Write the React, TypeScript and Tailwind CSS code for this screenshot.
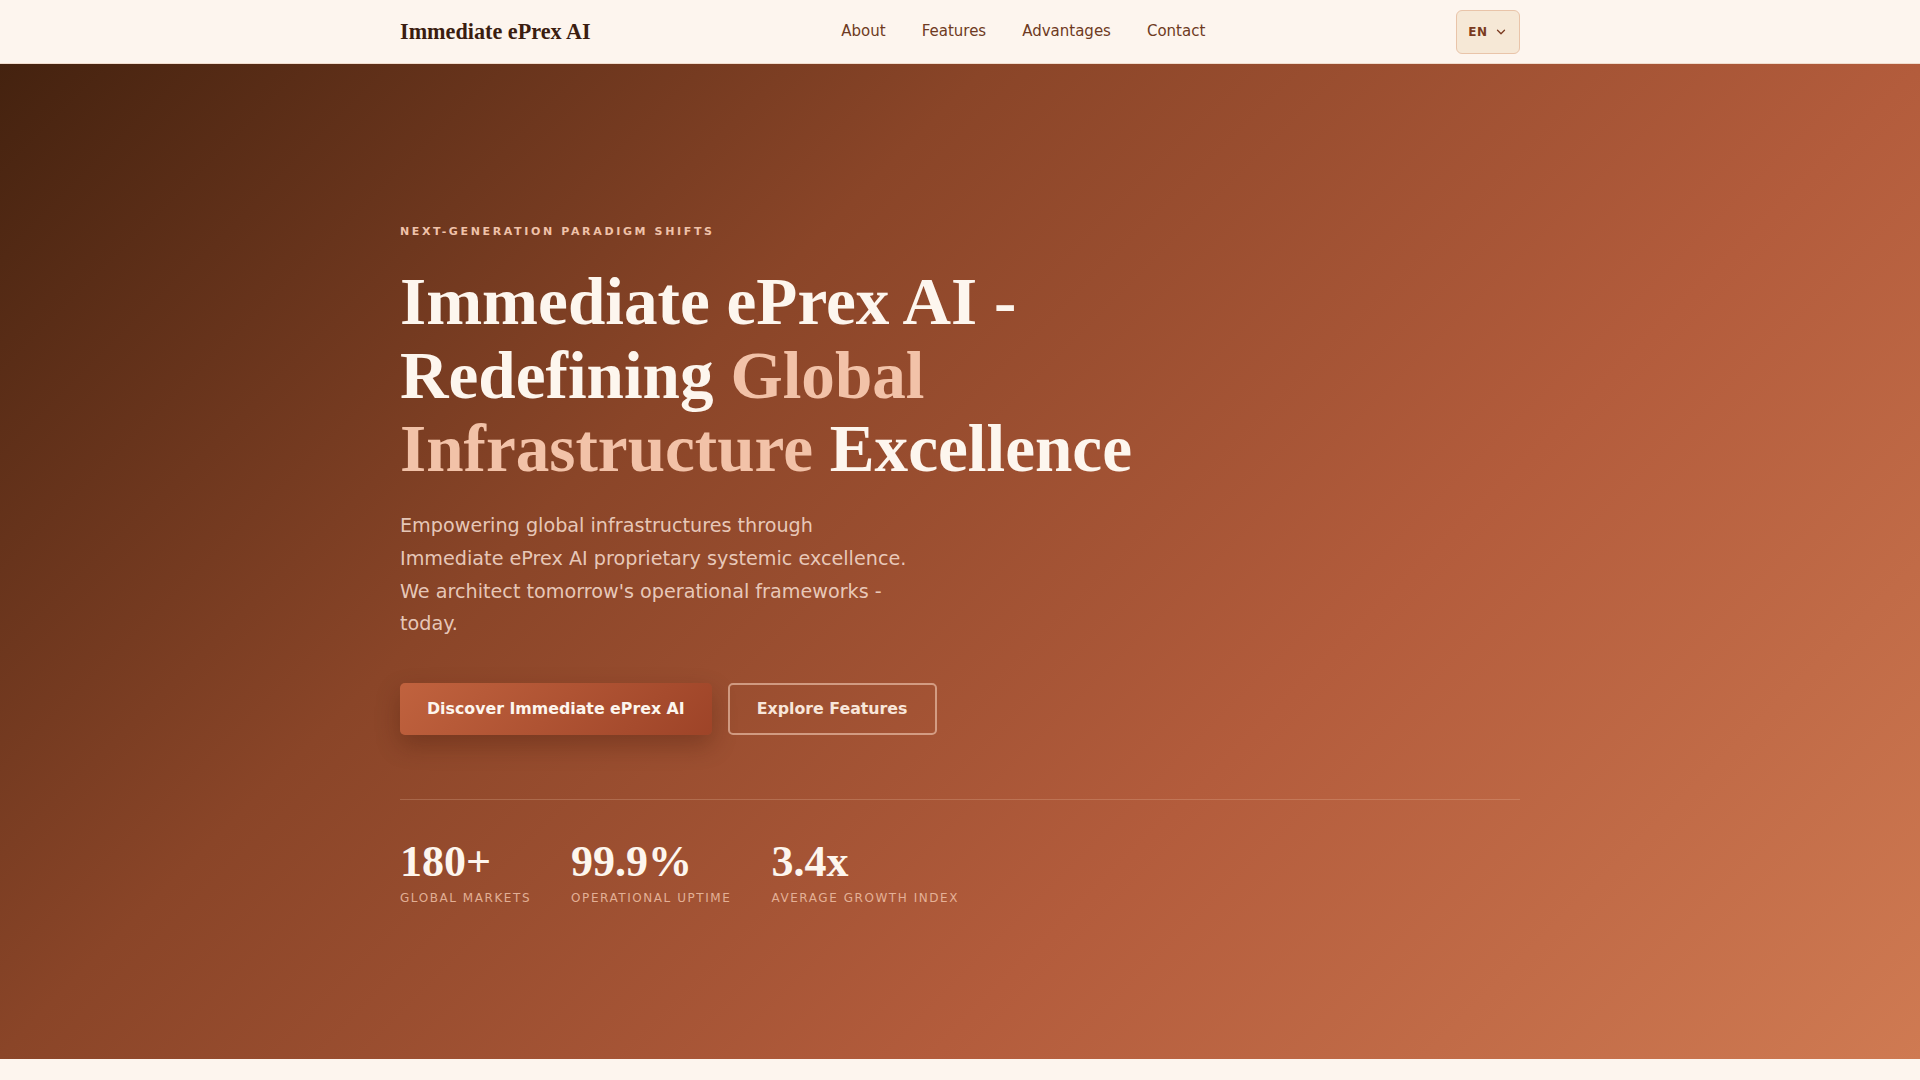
import { ChevronDown } from "lucide-react";

const serif = "font-['Liberation_Serif','Times_New_Roman',serif]";
const sans = "font-['DejaVu_Sans','Liberation_Sans',sans-serif]";

const stats = [
  { value: "180+", label: "Global Markets" },
  { value: "99.9%", label: "Operational Uptime" },
  { value: "3.4x", label: "Average Growth Index" },
];

export default function App() {
  return (
    <div className={`min-h-screen bg-[#fdf5ee] ${sans}`}>
      {/* HEADER */}
      <header className="h-16 bg-[#fdf5ee] border-b border-[#f1dccd]">
        <div className="max-w-[1120px] mx-auto h-full flex items-center justify-between">
          <a className={`${serif} text-[22.2px] font-bold text-[#3b1d10]`}>Immediate ePrex AI</a>
          <nav className="flex items-center gap-9 text-[15px] text-[#6e3a22]">
            <a>About</a>
            <a>Features</a>
            <a>Advantages</a>
            <a>Contact</a>
          </nav>
          <button className="w-16 h-11 flex items-center justify-center gap-1.5 rounded-md border border-[#e9c4a9] bg-[#f6e8d6] text-[#7a3a20] text-[12px] font-bold tracking-[0.06em]">
            EN
            <ChevronDown className="w-3.5 h-3.5" strokeWidth={2.25} />
          </button>
        </div>
      </header>

      {/* HERO */}
      <section className="h-[995px] flex items-center bg-[linear-gradient(135deg,#44220f_0%,#8a4528_34%,#b35c3c_66%,#cf7a52_100%)]">
        <div className="max-w-[1120px] w-full mx-auto pt-[8px]">
          <p className="text-[11px] font-bold tracking-[0.24em] uppercase text-[#f0c2a9]">
            Next-Generation Paradigm Shifts
          </p>

          <h1 className={`${serif} mt-[24px] text-[67.2px] leading-[1.1] font-bold text-[#fdf6ee]`}>
            Immediate ePrex AI -<br />
            Redefining <span className="text-[#f2c2a8]">Global</span>
            <br />
            <span className="text-[#f2c2a8]">Infrastructure</span> Excellence
          </h1>

          <p className="mt-[24px] max-w-[512px] text-[19.2px] leading-[1.7] text-[#f3d9cb]/90">
            Empowering global infrastructures through Immediate ePrex AI proprietary systemic
            excellence. We architect tomorrow's operational frameworks - today.
          </p>

          <div className="mt-[42px] flex items-center gap-4">
            <button className="h-[52px] px-[27px] rounded-[5px] bg-[linear-gradient(135deg,#c0623e,#9e4428)] text-[15.8px] font-bold text-[#fdf6ee] shadow-[0_10px_24px_rgba(60,20,8,0.3)]">
              Discover Immediate ePrex AI
            </button>
            <button className="h-[52px] px-[27px] rounded-[5px] border-2 border-[#f3cdb7]/60 text-[15.8px] font-bold text-[#f8e6da]">
              Explore Features
            </button>
          </div>

          <div className="mt-16 border-t border-[#f0c2a9]/25 pt-10 flex gap-10">
            {stats.map((s) => (
              <div key={s.label} className="flex flex-col">
                <span className={`${serif} text-[44px] leading-none font-bold text-[#fdf6ee]`}>
                  {s.value}
                </span>
                <span className="mt-[5px] text-[12px] uppercase tracking-[0.13em] text-[#f0c2a9]/85">
                  {s.label}
                </span>
              </div>
            ))}
          </div>
        </div>
      </section>

      <div className="h-[21px] bg-[#fdf5ee]" />
    </div>
  );
}
